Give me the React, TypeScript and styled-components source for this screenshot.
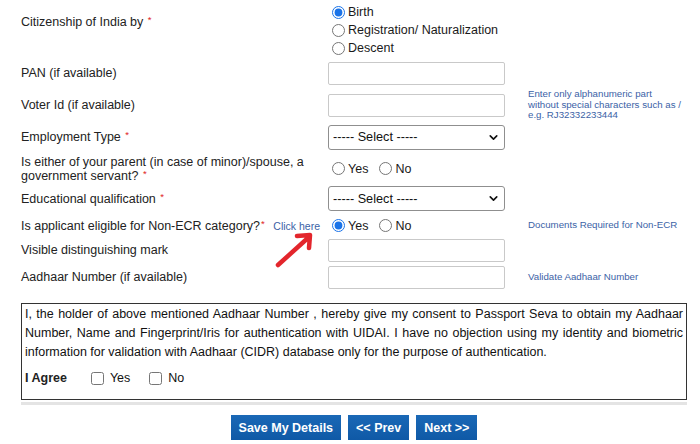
import styled, { createGlobalStyle } from "styled-components";
import { ChevronDown } from "lucide-react";

const GlobalStyle = createGlobalStyle`
  body {
    margin: 0;
    background: #ffffff;
    color: #222222;
    font-family: "Liberation Sans", Arial, Helvetica, sans-serif;
  }
`;

function Required() {
  return <StyledStar>*</StyledStar>;
}

function Choice({
  name,
  label,
  checked,
}: {
  name: string;
  label: string;
  checked?: boolean;
}) {
  return (
    <StyledChoice>
      <input type="radio" name={name} defaultChecked={checked} />
      {label}
    </StyledChoice>
  );
}

function SelectBox() {
  return (
    <StyledSelectWrap>
      <StyledSelect defaultValue="">
        <option value="">----- Select -----</option>
      </StyledSelect>
      <StyledChevron size={13} strokeWidth={3} />
    </StyledSelectWrap>
  );
}

export default function App() {
  return (
    <>
      <GlobalStyle />
      <StyledPage>
        <StyledRow $h={57} $align="start">
          <StyledLabel $top={15}>
            <span>
              Citizenship of India by <Required />
            </span>
          </StyledLabel>
          <StyledStack>
            <Choice name="citizen" label="Birth" checked />
            <Choice name="citizen" label="Registration/ Naturalization" />
            <Choice name="citizen" label="Descent" />
          </StyledStack>
        </StyledRow>

        <StyledRow $h={32}>
          <StyledLabel>PAN (if available)</StyledLabel>
          <StyledField>
            <StyledInput type="text" />
          </StyledField>
        </StyledRow>

        <StyledRow $h={32}>
          <StyledLabel>Voter Id (if available)</StyledLabel>
          <StyledField>
            <StyledInput type="text" />
          </StyledField>
          <StyledHelp>
            Enter only alphanumeric part
            <br />
            without special characters such as /
            <br />
            e.g. RJ32332233444
          </StyledHelp>
        </StyledRow>

        <StyledRow $h={32}>
          <StyledLabel>
            <span>
              Employment Type <Required />
            </span>
          </StyledLabel>
          <StyledField>
            <SelectBox />
          </StyledField>
        </StyledRow>

        <StyledRow $h={31}>
          <StyledLabel>
            <span>
              Is either of your parent (in case of minor)/spouse, a government
              servant? <Required />
            </span>
          </StyledLabel>
          <StyledField>
            <Choice name="parent" label="Yes" />
            <Choice name="parent" label="No" />
          </StyledField>
        </StyledRow>

        <StyledRow $h={29}>
          <StyledLabel>
            <span>
              Educational qualification <Required />
            </span>
          </StyledLabel>
          <StyledField>
            <SelectBox />
          </StyledField>
        </StyledRow>

        <StyledRow $h={25}>
          <StyledLabel>
            <span>
              Is applicant eligible for Non-ECR category?
              <Required />
            </span>
            <StyledLink href="#">Click here</StyledLink>
          </StyledLabel>
          <StyledField>
            <Choice name="ecr" label="Yes" checked />
            <Choice name="ecr" label="No" />
          </StyledField>
          <StyledHelp>Documents Required for Non-ECR</StyledHelp>
        </StyledRow>

        <StyledRow $h={24}>
          <StyledLabel>Visible distinguishing mark</StyledLabel>
          <StyledField>
            <StyledInput type="text" />
          </StyledField>
        </StyledRow>

        <StyledRow $h={30}>
          <StyledLabel>Aadhaar Number (if available)</StyledLabel>
          <StyledField>
            <StyledInput type="text" />
          </StyledField>
          <StyledHelp>Validate Aadhaar Number</StyledHelp>
        </StyledRow>

        <StyledConsentWrap>
          <StyledConsent>
            <StyledConsentText>
              I, the holder of above mentioned Aadhaar Number , hereby give my
              consent to Passport Seva to obtain my Aadhaar Number, Name and
              Fingerprint/Iris for authentication with UIDAI. I have no
              objection using my identity and biometric information for
              validation with Aadhaar (CIDR) database only for the purpose of
              authentication.
            </StyledConsentText>
            <StyledAgree>
              <StyledAgreeTitle>I Agree</StyledAgreeTitle>
              <StyledCheck>
                <input type="checkbox" />
                Yes
              </StyledCheck>
              <StyledCheck>
                <input type="checkbox" />
                No
              </StyledCheck>
            </StyledAgree>
          </StyledConsent>
        </StyledConsentWrap>

        <StyledButtons>
          <StyledButton>Save My Details</StyledButton>
          <StyledButton>&lt;&lt; Prev</StyledButton>
          <StyledButton>Next &gt;&gt;</StyledButton>
        </StyledButtons>

        <StyledArrow width="48" height="42" viewBox="0 0 48 42">
          <path
            d="M8 35 L39 7 M27 6 L40 5 L39 18"
            fill="none"
            stroke="#e3262c"
            strokeWidth="4.5"
            strokeLinecap="round"
            strokeLinejoin="round"
          />
        </StyledArrow>
      </StyledPage>
    </>
  );
}

const StyledPage = styled.div`
  position: relative;
  width: 700px;
  height: 444px;
  box-sizing: border-box;
  padding: 0 13px 0 21px;
  overflow: hidden;
`;

const StyledRow = styled.div<{ $h: number; $align?: string }>`
  display: grid;
  grid-template-columns: 307px 200px 1fr;
  height: ${(p) => p.$h}px;
  align-items: ${(p) => p.$align ?? "center"};
`;

const StyledLabel = styled.div<{ $top?: number }>`
  display: flex;
  align-items: center;
  padding: ${(p) => p.$top ?? 0}px 6px 0 0;
  font-size: 12.5px;
  line-height: 14px;
  color: #222222;
`;

const StyledStar = styled.span`
  color: #e02424;
  font-size: 9.5px;
  margin-left: 1px;
  vertical-align: 3px;
  line-height: 0;
`;

const StyledLink = styled.a`
  margin-left: auto;
  padding-right: 2px;
  font-size: 10.5px;
  color: #3b62a6;
  text-decoration: none;
`;

const StyledField = styled.div`
  display: flex;
  align-items: center;
`;

const StyledStack = styled.div`
  display: flex;
  flex-direction: column;
  padding-top: 3px;
`;

const StyledChoice = styled.label`
  display: inline-flex;
  align-items: center;
  height: 18px;
  margin-right: 7px;
  font-size: 12.5px;
  color: #1a1a1a;

  & input {
    width: 13px;
    height: 13px;
    margin: 0 3px 0 4px;
    accent-color: #1a73e8;
  }
`;

const StyledInput = styled.input`
  width: 177px;
  height: 23px;
  box-sizing: border-box;
  border: 1px solid #c9c9c9;
  border-radius: 2px;
  background: #ffffff;
  padding: 0 4px;
  font-size: 12.5px;
`;

const StyledSelectWrap = styled.div`
  position: relative;
  width: 177px;
  height: 25px;
`;

const StyledSelect = styled.select`
  appearance: none;
  width: 100%;
  height: 100%;
  box-sizing: border-box;
  border: 1px solid #8f8f8f;
  border-radius: 3px;
  background: #ffffff;
  padding: 0 20px 0 4px;
  font-family: "Liberation Sans", Arial, sans-serif;
  font-size: 12.7px;
  color: #111111;
`;

const StyledChevron = styled(ChevronDown)`
  position: absolute;
  right: 5px;
  top: 6px;
  color: #111111;
  pointer-events: none;
`;

const StyledHelp = styled.div`
  font-size: 9.7px;
  line-height: 10.5px;
  color: #3b62a6;
`;

const StyledConsentWrap = styled.div`
  margin-top: 11px;
  padding-bottom: 2px;
  border-bottom: 3px solid #e4e4e4;
`;

const StyledConsent = styled.div`
  border: 1px solid #333333;
  padding: 1px 3px 11px;
  height: 97px;
  box-sizing: border-box;
`;

const StyledConsentText = styled.p`
  margin: 0;
  font-size: 12.5px;
  line-height: 19px;
  text-align: justify;
  color: #111111;
`;

const StyledAgree = styled.div`
  display: flex;
  align-items: center;
  height: 20px;
  margin-top: 6px;
  font-size: 12.5px;
`;

const StyledAgreeTitle = styled.span`
  font-weight: bold;
  margin-right: 24px;
`;

const StyledCheck = styled.label`
  display: inline-flex;
  align-items: center;
  margin-right: 19px;
  color: #111111;

  & input {
    width: 13px;
    height: 13px;
    margin: 0 6px 0 0;
  }
`;

const StyledButtons = styled.div`
  display: flex;
  justify-content: center;
  gap: 7px;
  margin-top: 10px;
`;

const StyledButton = styled.button`
  height: 25px;
  padding: 0 8px;
  border: none;
  background: linear-gradient(#1a68b6, #0f59a6);
  color: #ffffff;
  font-family: "Liberation Sans", Arial, sans-serif;
  font-size: 12.5px;
  font-weight: bold;
  cursor: pointer;
`;

const StyledArrow = styled.svg`
  position: absolute;
  left: 270px;
  top: 230px;
`;
